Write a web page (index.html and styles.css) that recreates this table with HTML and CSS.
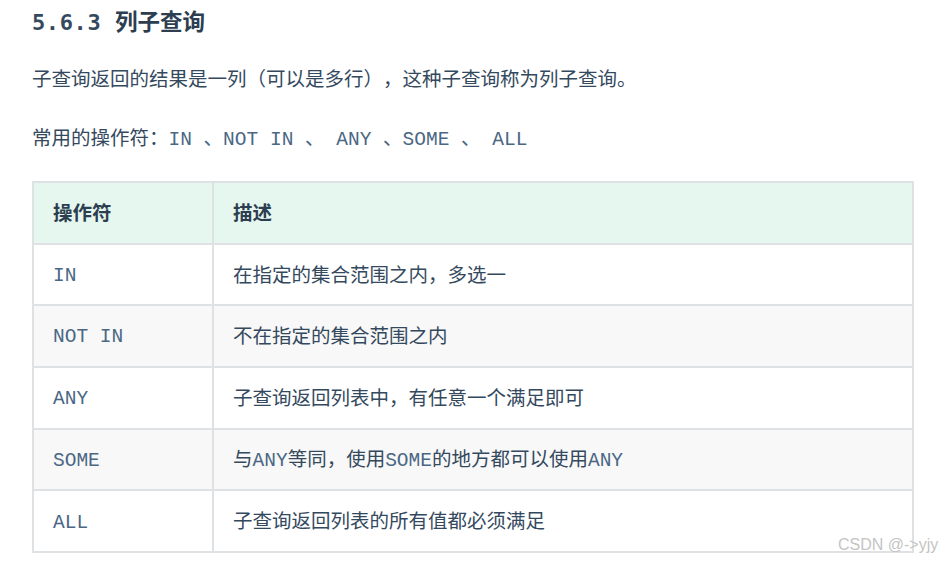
FILE: index.html
```html
<!DOCTYPE html>
<html lang="zh-CN">
<head>
<meta charset="utf-8">
<title>5.6.3 列子查询</title>
<link rel="stylesheet" href="styles.css">
</head>
<body>
<div class="page">
  <h3 class="title"><span class="num">5.6.3 </span>列子查询</h3>
  <p class="para">子查询返回的结果是一列（可以是多行），这种子查询称为列子查询。</p>
  <p class="para para-ops">常用的操作符：<code>IN 、NOT IN 、 ANY 、SOME 、 ALL</code></p>
  <table class="ops">
    <thead>
      <tr><th class="c1">操作符</th><th>描述</th></tr>
    </thead>
    <tbody>
      <tr><td class="c1"><code>IN</code></td><td>在指定的集合范围之内，多选一</td></tr>
      <tr><td class="c1"><code>NOT IN</code></td><td>不在指定的集合范围之内</td></tr>
      <tr><td class="c1"><code>ANY</code></td><td>子查询返回列表中，有任意一个满足即可</td></tr>
      <tr><td class="c1"><code>SOME</code></td><td>与<code>ANY</code>等同，使用<code>SOME</code>的地方都可以使用<code>ANY</code></td></tr>
      <tr><td class="c1"><code>ALL</code></td><td>子查询返回列表的所有值都必须满足</td></tr>
    </tbody>
  </table>
  <div class="watermark">CSDN @-&gt;yjy</div>
</div>
</body>
</html>
```
FILE: styles.css
```css
html, body {
  margin: 0;
  padding: 0;
  background: #ffffff;
}
body {
  width: 942px;
  height: 562px;
  overflow: hidden;
  font-family: "Noto Sans CJK SC", "Liberation Sans", sans-serif;
  color: #2c3e50;
  text-spacing-trim: space-all;
}
.page {
  position: relative;
  padding: 5px 0 0 32px;
  height: 557px;
}
.title {
  margin: 0;
  font-size: 22.5px;
  line-height: 30px;
  font-weight: 700;
  color: #2c3e50;
  font-family: "Noto Sans CJK SC", sans-serif;
}
.title .num {
  font-family: "DejaVu Sans Mono", "Liberation Mono", monospace;
  font-size: 22px;
  font-weight: 700;
  color: #34495e;
  letter-spacing: 0.6px;
  white-space: pre;
}
.para {
  margin: 25px 0 0 0;
  font-size: 19.5px;
  line-height: 30px;
  color: #34495e;
}
.para-ops {
  margin-top: 29px;
}
code {
  font-family: "Liberation Mono", "Noto Sans CJK SC", monospace;
  font-size: 19.5px;
  color: #4a6784;
  line-height: 1;
}
.ops {
  margin-top: 29px;
  border-collapse: collapse;
  width: 882px;
  font-size: 19.5px;
  color: #34495e;
}
.ops tr {
  height: 61.7px;
}
.ops th, .ops td {
  border: 2px solid #dfe2e5;
  padding: 0 19px 2px 19px;
  line-height: 24px;
  text-align: left;
  vertical-align: middle;
  font-weight: 400;
}
.ops .c1 {
  width: 140px;
}
.ops th {
  background: #e6f7ef;
  font-weight: 700;
  color: #2c3e50;
}
.ops tbody tr:nth-child(even) td {
  background: #f8f8f8;
}
.watermark {
  position: absolute;
  left: 838px;
  top: 536px;
  font-family: "Liberation Sans", "Noto Sans", sans-serif;
  font-size: 16px;
  color: #c4c4c4;
  white-space: nowrap;
}
```
